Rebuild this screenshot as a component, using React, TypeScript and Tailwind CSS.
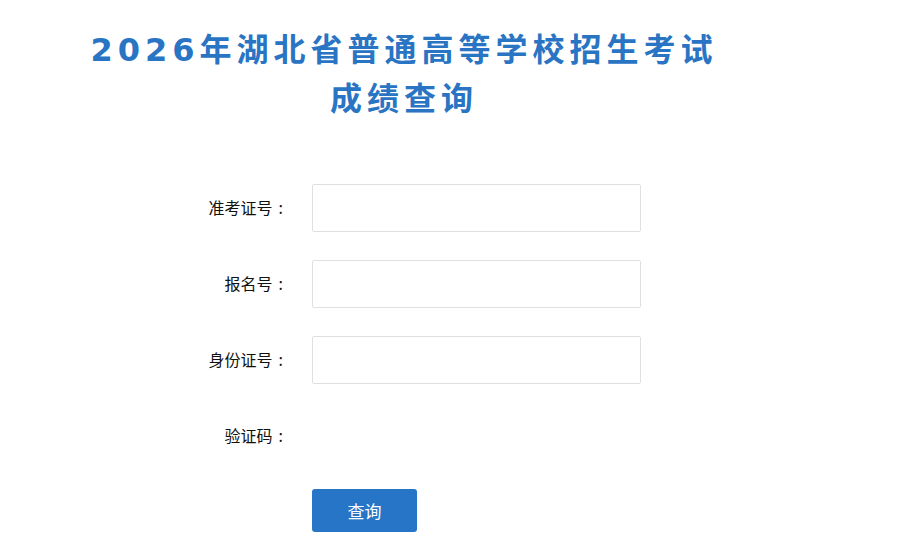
export default function App() {
  const rows = ['准考证号', '报名号', '身份证号'];

  return (
    <div className="min-h-screen bg-white" style={{ fontFamily: '"Noto Sans CJK SC", "DejaVu Sans", sans-serif' }}>
      <div
        className="w-[808px] pt-[26px] text-center text-[32px] font-bold leading-[49px] tracking-[5px] text-[#2a74c4]"
        style={{ fontFamily: '"DejaVu Sans", "Noto Sans CJK SC", sans-serif' }}
      >
        <div>2026年湖北省普通高等学校招生考试</div>
        <div>成绩查询</div>
      </div>

      <form className="mt-[60px] flex flex-col" onSubmit={(e) => e.preventDefault()}>
        {rows.map((label) => (
          <div key={label} className="mb-[28px] flex items-center">
            <label className="-mt-[3px] w-[283px] text-right text-[16px] text-[#111]">
              {label}
              <span className="ml-[6px]">:</span>
            </label>
            <input
              type="text"
              className="ml-[29px] h-[48px] w-[329px] rounded-[2px] border border-[#e0e0e0] bg-white px-3 outline-none"
            />
          </div>
        ))}

        <div className="flex h-[48px] items-center">
          <label className="-mt-[3px] w-[283px] text-right text-[16px] text-[#111]">
            验证码
            <span className="ml-[6px]">:</span>
          </label>
        </div>

        <div className="mt-[29px] pl-[312px]">
          <button
            type="submit"
            className="h-[43px] w-[105px] rounded-[3px] bg-[#2775c6] text-[17px] text-white"
          >
            查询
          </button>
        </div>
      </form>
    </div>
  );
}
